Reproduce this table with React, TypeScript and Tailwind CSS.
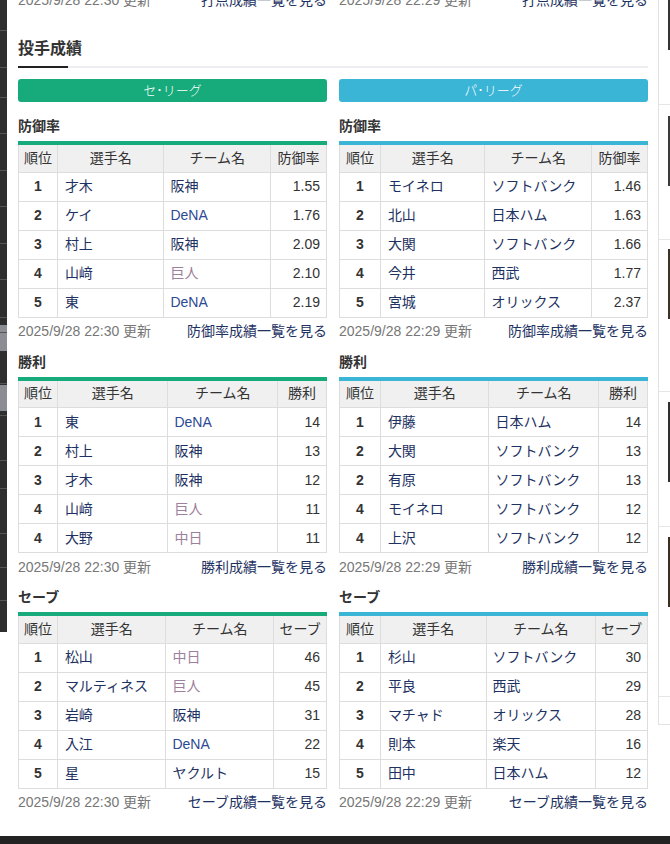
import React from "react";

type Row = { rank: number; name: string; team: string; value: string };
type Table = { title: string; col: string; link: string; widths: number[]; rows: Row[] };

const TEAM_COLOR: Record<string, string> = {
  阪神: "text-[#1d3262]",
  DeNA: "text-[#2c4a94]",
  巨人: "text-[#9d809b]",
  中日: "text-[#9d809b]",
  ヤクルト: "text-[#1d3262]",
};

const CENTRAL: Table[] = [
  {
    title: "防御率", col: "防御率", link: "防御率成績一覧を見る", widths: [39, 107, 107, 56],
    rows: [
      { rank: 1, name: "才木", team: "阪神", value: "1.55" },
      { rank: 2, name: "ケイ", team: "DeNA", value: "1.76" },
      { rank: 3, name: "村上", team: "阪神", value: "2.09" },
      { rank: 4, name: "山﨑", team: "巨人", value: "2.10" },
      { rank: 5, name: "東", team: "DeNA", value: "2.19" },
    ],
  },
  {
    title: "勝利", col: "勝利", link: "勝利成績一覧を見る", widths: [39, 111, 110, 49],
    rows: [
      { rank: 1, name: "東", team: "DeNA", value: "14" },
      { rank: 2, name: "村上", team: "阪神", value: "13" },
      { rank: 3, name: "才木", team: "阪神", value: "12" },
      { rank: 4, name: "山﨑", team: "巨人", value: "11" },
      { rank: 4, name: "大野", team: "中日", value: "11" },
    ],
  },
  {
    title: "セーブ", col: "セーブ", link: "セーブ成績一覧を見る", widths: [39, 109, 108, 53],
    rows: [
      { rank: 1, name: "松山", team: "中日", value: "46" },
      { rank: 2, name: "マルティネス", team: "巨人", value: "45" },
      { rank: 3, name: "岩崎", team: "阪神", value: "31" },
      { rank: 4, name: "入江", team: "DeNA", value: "22" },
      { rank: 5, name: "星", team: "ヤクルト", value: "15" },
    ],
  },
];

const PACIFIC: Table[] = [
  {
    title: "防御率", col: "防御率", link: "防御率成績一覧を見る", widths: [41, 105, 107, 56],
    rows: [
      { rank: 1, name: "モイネロ", team: "ソフトバンク", value: "1.46" },
      { rank: 2, name: "北山", team: "日本ハム", value: "1.63" },
      { rank: 3, name: "大関", team: "ソフトバンク", value: "1.66" },
      { rank: 4, name: "今井", team: "西武", value: "1.77" },
      { rank: 5, name: "宮城", team: "オリックス", value: "2.37" },
    ],
  },
  {
    title: "勝利", col: "勝利", link: "勝利成績一覧を見る", widths: [41, 109, 110, 49],
    rows: [
      { rank: 1, name: "伊藤", team: "日本ハム", value: "14" },
      { rank: 2, name: "大関", team: "ソフトバンク", value: "13" },
      { rank: 2, name: "有原", team: "ソフトバンク", value: "13" },
      { rank: 4, name: "モイネロ", team: "ソフトバンク", value: "12" },
      { rank: 4, name: "上沢", team: "ソフトバンク", value: "12" },
    ],
  },
  {
    title: "セーブ", col: "セーブ", link: "セーブ成績一覧を見る", widths: [41, 106, 110, 52],
    rows: [
      { rank: 1, name: "杉山", team: "ソフトバンク", value: "30" },
      { rank: 2, name: "平良", team: "西武", value: "29" },
      { rank: 3, name: "マチャド", team: "オリックス", value: "28" },
      { rank: 4, name: "則本", team: "楽天", value: "16" },
      { rank: 5, name: "田中", team: "日本ハム", value: "12" },
    ],
  },
];

function Footer({ date, link, first }: { date: string; link: string; first?: boolean }) {
  return (
    <div className={`h-[26px] flex justify-between items-center text-[14px] ${first ? "" : "mt-[1px]"}`}>
      <span className="text-[#777]">{date}</span>
      <span className="text-[#1d3262]">{link}</span>
    </div>
  );
}

function StatTable({ t, accent, date, index }: { t: Table; accent: string; date: string; index: number }) {
  return (
    <div>
      <div className={`${index === 0 ? "mt-[14px]" : "mt-[7px]"} h-[20px] leading-[20px] text-[14px] font-bold text-[#333]`}>
        {t.title}
      </div>
      <table className={`mt-[5px] w-full border-collapse border-t-4 ${accent} text-[14px] text-[#333]`}>
        <colgroup>
          {t.widths.map((w, i) => (
            <col key={i} style={{ width: w }} />
          ))}
        </colgroup>
        <thead>
          <tr className="h-[29px] bg-[#f0f0f0]">
            {["順位", "選手名", "チーム名", t.col].map((h) => (
              <th key={h} className="border border-t-0 border-[#ddd] font-normal text-center p-0">
                {h}
              </th>
            ))}
          </tr>
        </thead>
        <tbody>
          {t.rows.map((r, i) => (
            <tr key={i} className="h-[29px]">
              <td className="border border-[#ddd] text-center font-bold p-0">{r.rank}</td>
              <td className="border border-[#ddd] pl-[7px] text-[#1d3262]">{r.name}</td>
              <td className={`border border-[#ddd] pl-[6px] ${TEAM_COLOR[r.team] ?? "text-[#1d3262]"}`}>{r.team}</td>
              <td className="border border-[#ddd] pr-[6px] text-right">{r.value}</td>
            </tr>
          ))}
        </tbody>
      </table>
      <Footer date={date} link={t.link} />
    </div>
  );
}

function League({ name, btn, accent, date, tables }: { name: string; btn: string; accent: string; date: string; tables: Table[] }) {
  return (
    <div className="flex flex-col">
      <div className={`mt-[11px] h-[23px] rounded-[3px] ${btn} text-white text-[13px] font-light flex items-center justify-center`}>
        {name}
      </div>
      {tables.map((t, i) => (
        <StatTable key={t.title} t={t} accent={accent} date={date} index={i} />
      ))}
    </div>
  );
}

export default function App() {
  const stripLines = [30, 67, 97, 133, 170, 206, 243, 279, 317, 332, 383, 415, 460, 488, 533, 567, 600];
  return (
    <div className="w-[670px] h-[844px] overflow-hidden bg-white flex flex-col" style={{ fontFamily: '"Liberation Sans", "Noto Sans CJK JP", sans-serif' }}>
      <div className="flex items-start flex-1">
        {/* left sidebar edge */}
        <div className="w-[7px] h-[632px] bg-[#2e2e2e] flex flex-col relative">
          <div className="absolute left-0 top-[325px] w-full h-[26px] bg-[#8a8e94]" />
          <div className="absolute left-0 top-[385px] w-full h-[26px] bg-[#8a8e94]" />
          {stripLines.map((y) => (
            <div key={y} className="absolute left-0 w-full h-px bg-[#555]" style={{ top: y }} />
          ))}
        </div>

        {/* main */}
        <div className="w-[651px] pl-[11px] pr-[10px]">
          <div className="-mt-[13px] grid grid-cols-2 gap-x-[12px]">
            <Footer first date="2025/9/28 22:30 更新" link="打点成績一覧を見る" />
            <Footer first date="2025/9/28 22:29 更新" link="打点成績一覧を見る" />
          </div>
          <div className="mt-[25px] h-[22px] leading-[22px] text-[16px] font-bold text-[#333]">投手成績</div>
          <div className="mt-[6px] h-[2px] bg-[#eeeef2]">
            <div className="w-[50px] h-[2px] bg-[#222]" />
          </div>
          <div className="grid grid-cols-2 gap-x-[12px]">
            <League name="セ･リーグ" btn="bg-[#17aa7b]" accent="border-t-[#17aa7b]" date="2025/9/28 22:30 更新" tables={CENTRAL} />
            <League name="パ･リーグ" btn="bg-[#3ab5d6]" accent="border-t-[#3ab5d6]" date="2025/9/28 22:29 更新" tables={PACIFIC} />
          </div>
        </div>

        {/* right sidebar edge */}
        <div className="w-[12px] h-[725px] border-l border-b border-[#e2e2e2] flex flex-col">
          <div className="h-[50px] flex justify-end"><div className="w-[2px] h-[50px] bg-[#333]" /></div>
          <div className="h-[55px] border-b border-[#e6e6e6]" />
          <div className="h-[135px] border-b border-[#e6e6e6] pt-[11px] flex justify-end"><div className="w-[2px] h-[70px] bg-[#3a3a3a]" /></div>
          <div className="h-[152px] border-b border-[#e6e6e6] pt-[9px] flex justify-end"><div className="w-[2px] h-[70px] bg-[#3a3328]" /></div>
          <div className="h-[135px] border-b border-[#e6e6e6] pt-[10px] flex justify-end"><div className="w-[2px] h-[80px] bg-[#2f2f2f]" /></div>
          <div className="h-[170px] border-b border-[#e6e6e6] pt-[10px] flex justify-end"><div className="w-[2px] h-[70px] bg-[#3a3020]" /></div>
        </div>
      </div>
      <div className="h-[8px] bg-[#222]" />
    </div>
  );
}
